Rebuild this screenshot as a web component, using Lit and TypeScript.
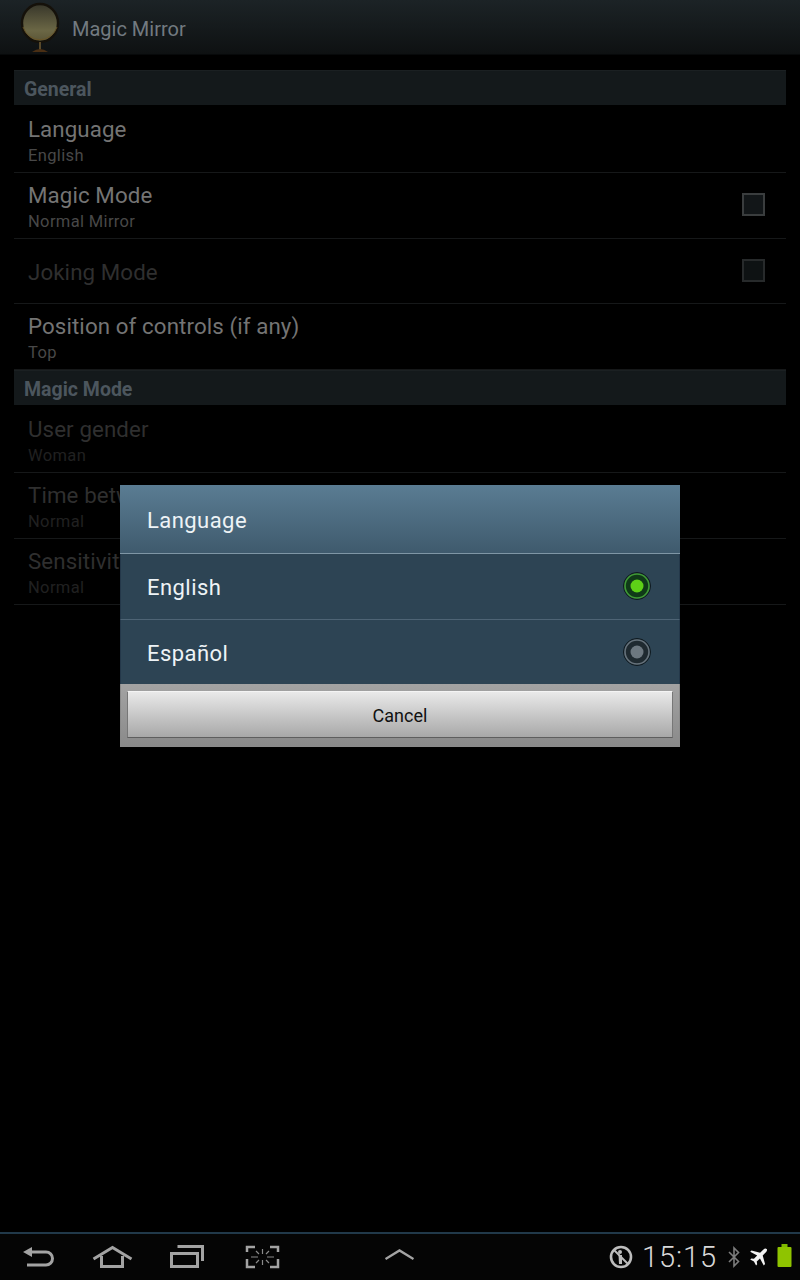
import { LitElement, html, css } from "lit";
import { customElement } from "lit/decorators.js";

type Row = { title: string; sub?: string; check?: boolean; dim?: boolean; h: number };
type Sec = { name: string; rows: Row[] };

const SECS: Sec[] = [
  {
    name: "General",
    rows: [
      { title: "Language", sub: "English", h: 67 },
      { title: "Magic Mode", sub: "Normal Mirror", check: true, h: 66 },
      { title: "Joking Mode", check: true, dim: true, h: 65 },
      { title: "Position of controls (if any)", sub: "Top", h: 66 },
    ],
  },
  {
    name: "Magic Mode",
    rows: [
      { title: "User gender", sub: "Woman", dim: true, h: 67 },
      { title: "Time between", sub: "Normal", dim: true, h: 66 },
      { title: "Sensitivity", sub: "Normal", dim: true, h: 66 },
    ],
  },
];

@customElement("app-root")
export class AppRoot extends LitElement {
  static styles = css`
    :host {
      display: block;
      position: relative;
      width: 800px;
      height: 1280px;
      background: #000;
      overflow: hidden;
      font-family: Roboto, "Liberation Sans", sans-serif;
    }
    .page { display: flex; flex-direction: column; height: 1280px; }
    .bar {
      height: 55px;
      box-sizing: border-box;
      flex: none;
      display: flex;
      align-items: center;
      padding-left: 20px;
      gap: 12px;
      background: linear-gradient(#1c2326, #0e1112);
      border-bottom: 1px solid #07090a;
    }
    .bar svg { display: block; margin-top: -3px; }
    .bar span { color: #727a80; font-size: 20px; margin-top: 4px; }
    .list { flex: 1; padding: 15px 14px 0; }
    .head {
      height: 35px;
      box-sizing: border-box;
      padding: 7px 0 0 10px;
      background: #14191b;
      border-top: 1px solid #1b2022;
      color: #4c565e;
      font-size: 19.5px;
      line-height: 24px;
      font-weight: 700;
      margin-bottom: 1px;
    }
    .row {
      box-sizing: border-box;
      border-bottom: 1px solid #161819;
      padding: 8px 14px 0;
      position: relative;
    }
    .head + .row { padding-top: 9px; }
    .row.single { padding-top: 19px; }
    .t { color: #747474; font-size: 22.3px; line-height: 28px; letter-spacing: 0.1px; }
    .s { color: #484848; font-size: 16.5px; line-height: 22px; letter-spacing: 0.35px; margin-top: 2px; }
    .dim .t { color: #2f2f2f; }
    .dim .s { color: #202020; }
    .cb {
      position: absolute;
      right: 21px;
      top: 20px;
      width: 23px;
      height: 23px;
      box-sizing: border-box;
      border: 2px solid #3a3d3e;
      background: #121618;
    }
    .dim .cb { border-color: #272a2b; background: #0e1213; }
    .dlg {
      position: absolute;
      left: 120px;
      top: 485px;
      width: 560px;
      height: 262px;
      box-sizing: border-box;
      padding: 1px;
      background: #8b8b8b;
      display: flex;
      flex-direction: column;
    }
    .dh {
      height: 69px;
      box-sizing: border-box;
      flex: none;
      margin: -1px -1px 0;
      background: linear-gradient(#5a7c93, #3f5a6d);
      border-bottom: 1px solid #7f96a5;
      color: #eef3f6;
      font-size: 22px;
      letter-spacing: 0.45px;
      padding: 22px 0 0 27px;
      line-height: 28px;
    }
    .opt {
      height: 66px;
      box-sizing: border-box;
      flex: none;
      margin: 0 -1px;
      background: #2d4454;
      display: flex;
      align-items: center;
      justify-content: space-between;
      padding: 2px 27px 0 26px;
      color: #eef3f6;
      font-size: 22px;
      letter-spacing: 0.45px;
      border-bottom: 1px solid #4e6475;
      border-left: 1px solid #24384a;
      border-right: 1px solid #24384a;
    }
    .opt.last { border-bottom: 0; height: 64px; }
    .opt svg { display: block; margin-top: -3px; }
    .foot {
      height: 62px;
      flex: none;
      box-sizing: border-box;
      padding: 7px 6px 8px;
      background: linear-gradient(#a3a3a3, #8a8a8a);
      display: flex;
    }
    .btn {
      flex: 1;
      box-sizing: border-box;
      background: linear-gradient(#e9e9e9, #a8a8a8);
      border: 1px solid #5e5e5e;
      border-top-color: #f4f4f4;
      border-left-color: #777;
      border-right-color: #777;
      color: #111;
      font-size: 18px;
      text-align: center;
      padding-top: 2px;
      line-height: 43px;
    }
    .nav {
      flex: none;
      height: 48px;
      box-sizing: border-box;
      border-top: 2px solid #21394a;
      background: #050505;
      display: flex;
      align-items: center;
      position: relative;
    }
    .nav svg { display: block; }
    .navl { position: absolute; left: 0; top: 0; height: 46px; width: 430px; }
    .navl svg { position: absolute; top: 10px; }
    .i-back { left: 22px; }
    .i-home { left: 92px; }
    .i-recent { left: 169px; }
    .i-shot { left: 245px; }
    .navl .i-up { left: 385px; top: 15px; }
    .st {
      position: absolute;
      right: 8px;
      top: 0;
      height: 46px;
      display: flex;
      align-items: center;
    }
    .clock { color: #d8d8d8; font-size: 29px; font-weight: 300; letter-spacing: 0.9px; margin: 0 11px 0 9px; line-height: 46px; }
    .i-plane { margin-left: 8px; }
    .i-batt { margin-left: 8px; margin-top: -3px; }
  `;

  private mirror() {
    return html`<svg width="40" height="54" viewBox="0 0 40 54">
      <defs>
        <linearGradient id="m" x1="0" y1="0" x2="0" y2="1">
          <stop offset="0" stop-color="#37362a" /><stop offset="0.7" stop-color="#6b6745" /><stop offset="1" stop-color="#5a5536" />
        </linearGradient>
      </defs>
      <ellipse cx="20" cy="24" rx="18" ry="19" fill="url(#m)" stroke="#15110a" stroke-width="2.4" />
      <path d="M3 28 A18 19 0 0 0 37 28" fill="none" stroke="#6a5628" stroke-width="1" />
      <rect x="19" y="43" width="2" height="8" fill="#5a4a2a" />
      <path d="M12 53 q8 -6 16 0 z" fill="#4a2f14" />
    </svg>`;
  }

  private radio(on: boolean) {
    const ring = on ? "#3f9a35" : "#66727b";
    const dot = on ? "#5ed017" : "#6d7880";
    const bg = on ? "#103a18" : "#1f2a30";
    return html`<svg width="30" height="30" viewBox="0 0 30 30">
      <circle cx="15" cy="15" r="13.5" fill="#1c2b34" stroke="#0f1a20" stroke-width="1" />
      <circle cx="15" cy="15" r="12" fill="${bg}" stroke="${ring}" stroke-width="1.6" />
      <circle cx="15" cy="15" r="6.500" fill="${dot}" />
    </svg>`;
  }

  private navIcons() {
    const c = "#a3a3a3";
    return html`
      <svg class="i-back" width="34" height="26" viewBox="0 0 34 26" fill="none" stroke="${c}" stroke-width="3">
        <path d="M6 8 H24 a6.500 6.500 0 0 1 0 13 H5" />
        <path d="M1 8 L10 3 V13 Z" fill="${c}" stroke="none" />
      </svg>
      <svg class="i-home" width="41" height="26" viewBox="0 0 41 26" fill="none" stroke="${c}" stroke-width="3">
        <path d="M1.500 15 L20.500 3.500 L39.500 15" />
        <path d="M9.500 12 V22.500 H30.500 V12" />
      </svg>
      <svg class="i-recent" width="37" height="26" viewBox="0 0 37 26" fill="none" stroke="${c}" stroke-width="3">
        <rect x="2.500" y="9.500" width="26" height="13" />
        <path d="M8.500 2.500 H33.500 V17" />
      </svg>
      <svg class="i-shot" width="35" height="26" viewBox="0 0 35 26" fill="none" stroke="${c}" stroke-width="2.500">
        <path d="M10 3 H2 V8 M2 15 V23 H10 M25 3 H33 V8 M33 15 V23 H25" />
        <g stroke-width="1.200" stroke="#8a8a8a"><path d="M17.500 5 V10 M17.500 16 V21 M6 13 H13 M22 13 H29 M11 7 L14 10 M24 7 L21 10 M11 19 L14 16 M24 19 L21 16" /></g>
      </svg>
      <svg class="i-up" width="29" height="16" viewBox="0 0 29 16" fill="none" stroke="${c}" stroke-width="2.400">
        <path d="M0.500 10 L14.500 1.500 L28.500 10" />
      </svg>
    `;
  }

  private statusIcons() {
    const c = "#bdbdbd";
    return html`
      <svg width="24" height="24" viewBox="0 0 24 24" fill="none" stroke="${c}" stroke-width="2.600">
        <circle cx="12" cy="12" r="10" />
        <path d="M5 5 L19 19" stroke-width="2" />
        <circle cx="11" cy="7" r="2" fill="${c}" stroke="none" />
        <path d="M9.500 10 H13 V19 H10 Z" fill="${c}" stroke="none" />
      </svg>
      <span class="clock">15:15</span>
      <svg width="12" height="22" viewBox="0 0 12 22" fill="none" stroke="#7c7c7c" stroke-width="1.600">
        <path d="M1 6 L10.500 15.500 L6 20 V2 L10.500 6.500 L1 16" />
      </svg>
      <svg class="i-plane" width="21" height="21" viewBox="0 0 24 24" fill="#f2f2f2">
        <path d="M21.500 2.500c-1-1-2.700-.8-3.800.3l-3.900 3.900L4 4 2.500 5.500l8 4.300-3.700 3.700-3-.5L2.500 14.300l4.300 2.400 2.400 4.300 1.300-1.300-.5-3 3.700-3.700 4.300 8 1.500-1.500-2.700-9.800 3.900-3.900c1.100-1.100 1.300-2.800.8-3.800z" />
      </svg>
      <svg class="i-batt" width="15" height="24" viewBox="0 0 15 24">
        <rect x="4.500" y="0" width="6" height="3" fill="#7fb800" />
        <rect x="0.500" y="3" width="14" height="20" rx="1" fill="#8fc400" />
      </svg>
    `;
  }

  render() {
    return html`
      <div class="page">
        <div class="bar">${this.mirror()}<span>Magic Mirror</span></div>
        <div class="list">
          ${SECS.map(
            (s) => html`
              <div class="head">${s.name}</div>
              ${s.rows.map(
                (r) => html`
                  <div class="row ${r.dim ? "dim" : ""} ${r.sub ? "" : "single"}" style="height:${r.h}px">
                    <div class="t">${r.title}</div>
                    ${r.sub ? html`<div class="s">${r.sub}</div>` : ""}
                    ${r.check ? html`<div class="cb"></div>` : ""}
                  </div>
                `
              )}
            `
          )}
        </div>
        <div class="nav">
          <div class="navl">${this.navIcons()}</div>
          <div class="st">${this.statusIcons()}</div>
        </div>
      </div>
      <div class="dlg">
        <div class="dh">Language</div>
        <div class="opt"><span>English</span>${this.radio(true)}</div>
        <div class="opt last"><span>Español</span>${this.radio(false)}</div>
        <div class="foot"><div class="btn">Cancel</div></div>
      </div>
    `;
  }
}
